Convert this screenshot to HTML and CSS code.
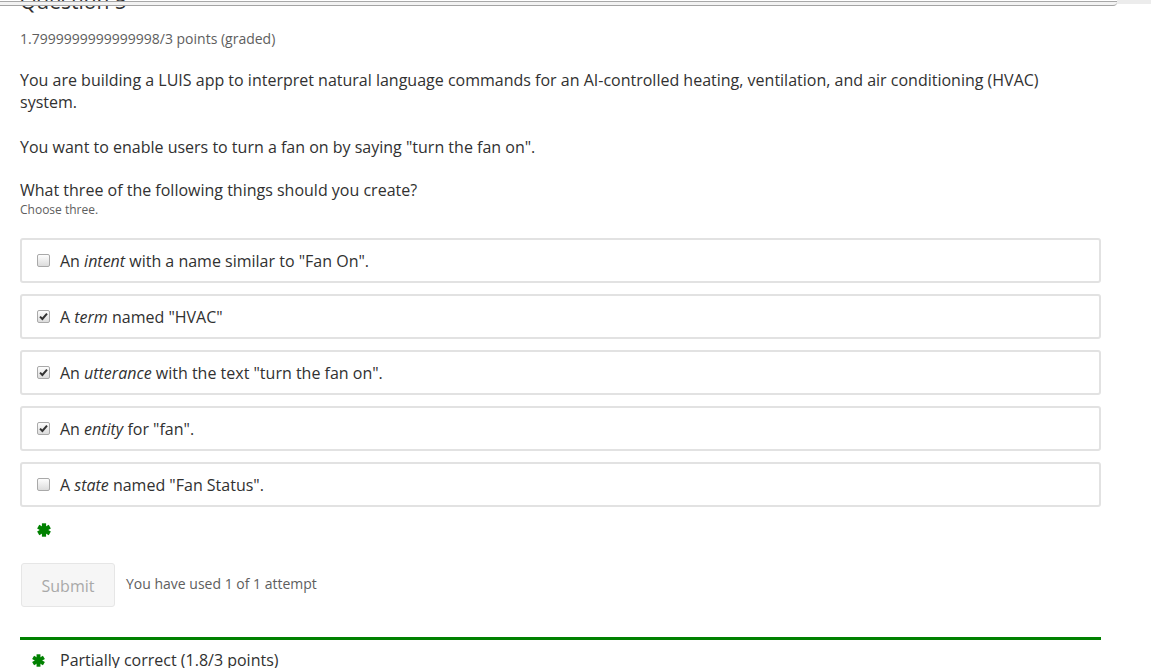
FILE: index.html
```html
<!DOCTYPE html>
<html lang="en">
<head>
<meta charset="utf-8">
<title>Question 5</title>
<link rel="stylesheet" href="styles.css">
</head>
<body>
<div class="topbar"><div class="topbar-main"></div><div class="topbar-end"></div></div>
<div class="problem">
  <h3 class="problem-header">Question 5</h3>
  <div class="points">1.7999999999999998/3 points (graded)</div>
  <p class="lead">You are building a LUIS app to interpret natural language commands for an AI-controlled heating, ventilation, and air conditioning (HVAC) system.</p>
  <p class="lead">You want to enable users to turn a fan on by saying "turn the fan on".</p>
  <p class="question">What three of the following things should you create?</p>
  <div class="hint">Choose three.</div>

  <div class="choices">
    <label class="choice"><span class="cb"></span><span>An <em>intent</em> with a name similar to "Fan On".</span></label>
    <label class="choice"><span class="cb checked"><svg viewBox="0 0 13 13" width="13" height="13"><path d="M3 6.6 L5.4 9 L10 3.6" fill="none" stroke="#333" stroke-width="2"/></svg></span><span>A <em>term</em> named "HVAC"</span></label>
    <label class="choice"><span class="cb checked"><svg viewBox="0 0 13 13" width="13" height="13"><path d="M3 6.6 L5.4 9 L10 3.6" fill="none" stroke="#333" stroke-width="2"/></svg></span><span>An <em>utterance</em> with the text "turn the fan on".</span></label>
    <label class="choice"><span class="cb checked"><svg viewBox="0 0 13 13" width="13" height="13"><path d="M3 6.6 L5.4 9 L10 3.6" fill="none" stroke="#333" stroke-width="2"/></svg></span><span>An <em>entity</em> for "fan".</span></label>
    <label class="choice"><span class="cb"></span><span>A <em>state</em> named "Fan Status".</span></label>
  </div>

  <div class="status-icon">
    <svg class="asterisk" viewBox="0 0 14 14" width="14" height="14"><g stroke="#008100" stroke-width="4.2"><line x1="7" y1="0.3" x2="7" y2="13.7"/><line x1="1.2" y1="3.65" x2="12.8" y2="10.35"/><line x1="1.2" y1="10.35" x2="12.8" y2="3.65"/></g></svg>
  </div>

  <div class="actions">
    <button class="submit" disabled>Submit</button>
    <span class="attempts">You have used 1 of 1 attempt</span>
  </div>

  <div class="notification">
    <svg class="asterisk" viewBox="0 0 14 14" width="14" height="14"><g stroke="#008100" stroke-width="4.2"><line x1="7" y1="0.3" x2="7" y2="13.7"/><line x1="1.2" y1="3.65" x2="12.8" y2="10.35"/><line x1="1.2" y1="10.35" x2="12.8" y2="3.65"/></g></svg>
    <span>Partially correct (1.8/3 points)</span>
  </div>
</div>
</body>
</html>
```
FILE: styles.css
```css
html, body {
  margin: 0;
  padding: 0;
  background: #fff;
  overflow: hidden;
}
body {
  font-family: "Open Sans", "Liberation Sans", sans-serif;
  color: #313131;
}
.topbar {
  position: absolute;
  top: 0;
  left: 0;
  right: 0;
  height: 7px;
  display: flex;
  z-index: 5;
}
.topbar-main {
  width: 1117px;
  margin-top: 1px;
  height: 3px;
  border-top: 1px solid #a8a8a8;
  border-bottom: 1px solid #a4a4a4;
  background: #f3f3f3;
  border-bottom-right-radius: 4px;
}
.topbar-end {
  flex: 1;
  height: 4px;
  background: #ececec;
}
.problem {
  width: 1081px;
  padding-left: 20px;
}
.problem-header {
  margin: -13px 0 0;
  font-size: 21px;
  line-height: 28px;
  font-weight: 400;
  color: #313131;
}
.points {
  margin-top: 14px;
  font-size: 14px;
  line-height: 20px;
  color: #5e5e5e;
}
.lead, .question {
  margin: 0;
  font-size: 16px;
  line-height: 22px;
  max-width: 1060px;
}
.points + .lead { margin-top: 20px; }
.lead { margin-bottom: 23px; }
.lead + .lead { margin-bottom: 21px; }
.hint {
  font-size: 12px;
  line-height: 17px;
  color: #5e5e5e;
  margin-top: 0;
}
.choices {
  margin-top: 20px;
  display: flex;
  flex-direction: column;
  gap: 11px;
}
.choice {
  display: flex;
  align-items: center;
  height: 41px;
  border: 2px solid #e2e2e2;
  border-radius: 3px;
  padding-left: 15px;
  font-size: 16px;
  color: #313131;
}
.cb {
  width: 11px;
  height: 11px;
  border: 1px solid #a9a9a9;
  border-radius: 2px;
  background: linear-gradient(#fdfdfd, #dcdcdc);
  margin-right: 10px;
  position: relative;
  flex: none;
}
.cb svg {
  position: absolute;
  left: -1px;
  top: -1px;
}
.status-icon {
  height: 14px;
  padding: 16px 0 0 17px;
}
.asterisk { display: block; }
.actions {
  margin-top: 26px;
  display: flex;
  align-items: center;
  gap: 11px;
}
.submit {
  width: 94px;
  height: 44px;
  margin-left: 1px;
  border: 1px solid #e6e6e6;
  border-radius: 3px;
  background: #f6f6f6;
  color: #a9a9a9;
  font-family: "Open Sans", "Liberation Sans", sans-serif;
  font-size: 16px;
  padding: 0;
  padding-top: 2px;
}
.attempts {
  font-size: 14px;
  color: #5e5e5e;
  margin-top: -4px;
}
.notification {
  margin-top: 30px;
  border-top: 3px solid #008100;
  display: flex;
  align-items: center;
  padding: 9px 0 0 12px;
  font-size: 16px;
  color: #313131;
}
.notification .asterisk {
  width: 13px;
  height: 13px;
  margin-right: 15px;
}
```
